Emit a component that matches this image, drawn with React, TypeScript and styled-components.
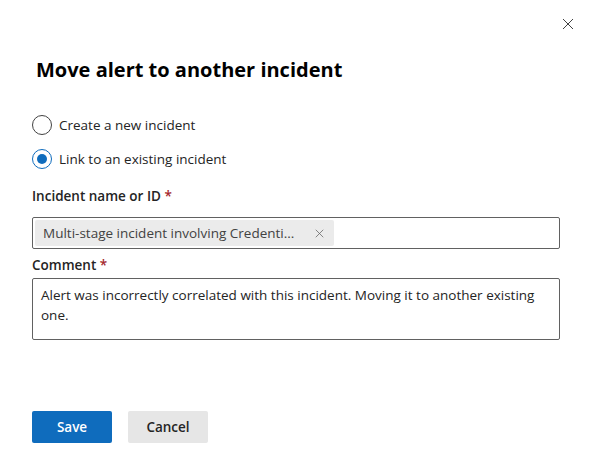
import styled, { createGlobalStyle } from 'styled-components';

const GlobalStyle = createGlobalStyle`
  html, body {
    margin: 0;
    padding: 0;
    background: #ffffff;
  }
  body {
    font-family: 'Segoe UI', 'Open Sans', 'Noto Sans', sans-serif;
    color: #242424;
  }
`;

const Dialog = styled.section`
  width: 592px;
  height: 460px;
  box-sizing: border-box;
  padding: 12px 32px 0 32px;
  display: flex;
  flex-direction: column;
`;

const TopBar = styled.div`
  display: flex;
  justify-content: flex-end;
  margin-right: -20px;
`;

const CloseButton = styled.button`
  width: 24px;
  height: 24px;
  border: none;
  background: transparent;
  padding: 0;
  display: flex;
  align-items: center;
  justify-content: center;
  cursor: pointer;
`;

const Title = styled.h2`
  margin: 20px 0 0 4px;
  font-size: 20px;
  line-height: 28px;
  font-weight: 700;
  color: #000;
`;

const RadioGroup = styled.div`
  display: flex;
  flex-direction: column;
  gap: 12px;
  margin-top: 30px;
`;

const RadioRow = styled.label`
  display: flex;
  align-items: center;
  gap: 7px;
  height: 22px;
  font-size: 13.5px;
  color: #242424;
`;

const RadioCircle = styled.span<{ $checked?: boolean }>`
  width: 20px;
  height: 20px;
  box-sizing: border-box;
  border-radius: 50%;
  border: 1px solid ${({ $checked }) => ($checked ? '#0f6cbd' : '#424242')};
  display: flex;
  align-items: center;
  justify-content: center;

  &::after {
    content: '';
    width: 10px;
    height: 10px;
    border-radius: 50%;
    background: #0f6cbd;
    display: ${({ $checked }) => ($checked ? 'block' : 'none')};
  }
`;

const FieldLabel = styled.div<{ $top: number }>`
  margin-top: ${({ $top }) => $top}px;
  font-size: 13.5px;
  line-height: 20px;
  font-weight: 600;
  color: #242424;

  & > span {
    color: #a4262c;
  }
`;

const TagInput = styled.div`
  margin-top: 11px;
  height: 32px;
  box-sizing: border-box;
  border: 1px solid #616161;
  border-radius: 2px;
  padding: 2px;
  display: flex;
  align-items: stretch;
`;

const Tag = styled.div`
  background: #ebebeb;
  border-radius: 2px;
  width: 299px;
  box-sizing: border-box;
  padding: 0 10px 0 8px;
  display: flex;
  align-items: center;
  justify-content: space-between;
  font-size: 13.5px;
  color: #424242;
`;

const TagRemove = styled.span`
  display: flex;
  align-items: center;
`;

const CommentBox = styled.div`
  margin-top: 3px;
  height: 62px;
  box-sizing: border-box;
  border: 1px solid #616161;
  border-radius: 2px;
  padding: 6px 8px;
  font-size: 13.5px;
  line-height: 20px;
  color: #242424;
`;

const Footer = styled.div`
  display: flex;
  gap: 16px;
  margin-top: 71px;
`;

const Button = styled.button<{ $primary?: boolean }>`
  height: 32px;
  min-width: 80px;
  padding: 0 18px;
  box-sizing: border-box;
  border: none;
  border-radius: 2px;
  font-family: inherit;
  font-size: 13.5px;
  font-weight: 600;
  background: ${({ $primary }) => ($primary ? '#0f6cbd' : '#e6e6e6')};
  color: ${({ $primary }) => ($primary ? '#ffffff' : '#242424')};
  cursor: pointer;
`;

const Cross = ({ size, color }: { size: number; color: string }) => (
  <svg width={size} height={size} viewBox="0 0 12 12">
    <path d="M1 1L11 11M11 1L1 11" stroke={color} strokeWidth="1" />
  </svg>
);

export default function App() {
  return (
    <>
      <GlobalStyle />
      <Dialog>
        <TopBar>
          <CloseButton aria-label="Close">
            <Cross size={12} color="#424242" />
          </CloseButton>
        </TopBar>
        <Title>Move alert to another incident</Title>
        <RadioGroup>
          <RadioRow>
            <RadioCircle />
            Create a new incident
          </RadioRow>
          <RadioRow>
            <RadioCircle $checked />
            Link to an existing incident
          </RadioRow>
        </RadioGroup>
        <FieldLabel $top={16}>
          Incident name or ID <span>*</span>
        </FieldLabel>
        <TagInput>
          <Tag>
            Multi-stage incident involving Credenti...
            <TagRemove>
              <Cross size={9} color="#616161" />
            </TagRemove>
          </Tag>
        </TagInput>
        <FieldLabel $top={6}>
          Comment <span>*</span>
        </FieldLabel>
        <CommentBox>
          Alert was incorrectly correlated with this incident. Moving it to another existing
          one.
        </CommentBox>
        <Footer>
          <Button $primary>Save</Button>
          <Button>Cancel</Button>
        </Footer>
      </Dialog>
    </>
  );
}
